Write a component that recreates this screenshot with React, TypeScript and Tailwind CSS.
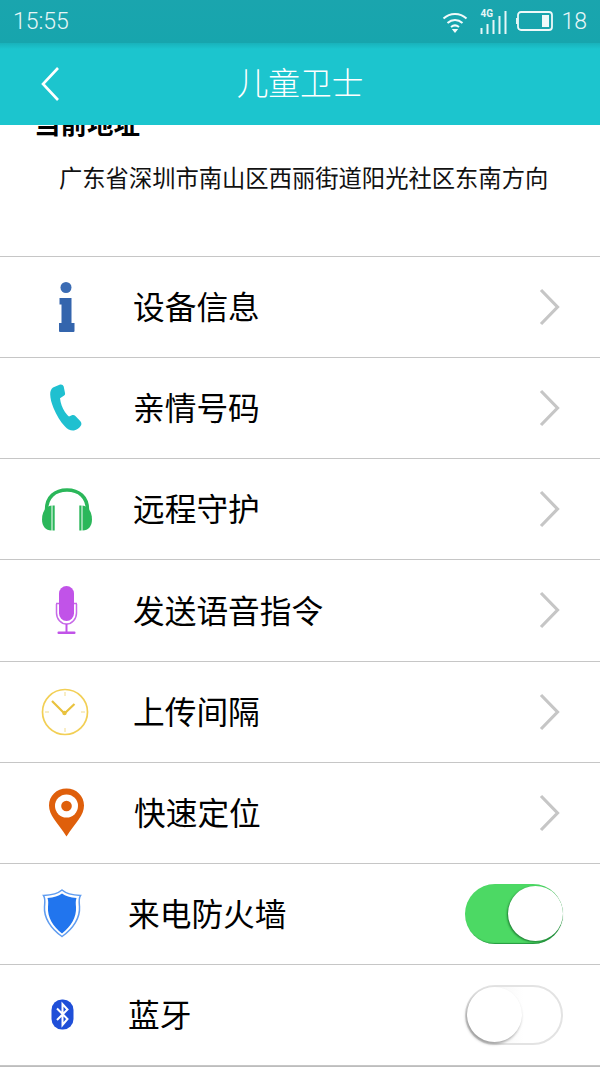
import { ReactNode } from 'react'

const CJK = '[font-family:"Noto_Sans_CJK_SC","Noto_Sans",sans-serif]'

// ── Row icons ─────────────────────────────────────────
function InfoIcon() {
  return (
    <svg width="16" height="50" viewBox="0 0 16 50">
      <circle cx="7" cy="5.500" r="5.500" fill="#3b6cb4" />
      <path d="M.5 16h12v25h3v8a1 1 0 0 1-1 1H1a1 1 0 0 1-1-1v-8h2.500V22.500H.5z" fill="#3465ad" />
    </svg>
  )
}

function PhoneIcon() {
  return (
    <svg width="32" height="49" viewBox="0 0 32 49">
      <path
        d="M3 3.500 9.500.8c2-.8 3.500 0 4.200 1.700l1.300 6.500c.3 1.500-.2 2.300-1.200 2.800l-3.800 2.500c.6 5 2.300 10 4.800 13.500 1.200 1.700 2.500 3.500 4.200 4.700l2.800-1.200c1.500-.6 2.700-.2 3.600.8l5 5.200c1.300 1.500 1.300 3.300.2 4.800-1.300 2-3.600 3.900-6.600 4.300-3.500.4-6.500-1.200-9-4C10.500 38 6.500 31 3.500 24 1.500 19 .3 14.500.2 10.500.1 7.500 1 5 3 3.500z"
        fill="#1fc0d0"
      />
    </svg>
  )
}

function HeadphonesIcon() {
  return (
    <svg width="50" height="43" viewBox="0 0 50 43">
      <path d="M4.500 22C4.500 9 13 2 25 2s20.500 7 20.500 20" fill="none" stroke="#2bb75a" strokeWidth="3.500" />
      <path d="M9.500 17.500V42.500C3.500 42.500 0 38 0 31.500 0 24 3.500 18.500 9.500 17.500z" fill="#2bb75a" />
      <path d="M40.500 17.500V42.500c6 0 9.500-4.500 9.500-11 0-7.500-3.500-13-9.500-14z" fill="#2bb75a" />
      <rect x="10.500" y="17.500" width="2.200" height="25" fill="#2bb75a" />
      <rect x="37.300" y="17.500" width="2.200" height="25" fill="#2bb75a" />
    </svg>
  )
}

function MicIcon() {
  return (
    <svg width="24" height="50" viewBox="0 0 24 50">
      <rect x="4" y="1" width="15" height="35" rx="7.500" fill="#c153e8" />
      <path d="M1.500 19v9c0 6 4.500 11 10 11s10-5 10-11v-9" fill="none" stroke="#c76ae8" strokeWidth="1.500" />
      <path d="M1 18.500h3M19 18.500h3" stroke="#c76ae8" strokeWidth="1.500" />
      <path d="M11.500 39v8" stroke="#c153e8" strokeWidth="2" />
      <rect x="2.500" y="46.500" width="18" height="2.500" rx="1" fill="#c153e8" />
    </svg>
  )
}

function ClockIcon() {
  return (
    <svg width="48" height="48" viewBox="0 0 48 48">
      <circle cx="24" cy="24" r="22.500" fill="none" stroke="#f2cf55" strokeWidth="1.700" />
      <path d="M24 4v4M24 40v4M4 24h4M40 24h4" stroke="#f3dc8c" strokeWidth="1" />
      <path d="M11 13 23.500 25.500 33.500 16" fill="none" stroke="#e9c23e" strokeWidth="2.200" />
      <circle cx="23.500" cy="25" r="2.200" fill="#e9c23e" />
    </svg>
  )
}

function PinIcon() {
  return (
    <svg width="37" height="49" viewBox="0 0 36 49">
      <path
        d="M18 .5C8 .5.500 8 .5 17.500c0 5 2 9 5 13.500C9 36 14 42 18 48.500 22 42 27 36 30.500 31c3-4.500 5-8.500 5-13.500C35.500 8 28 .5 18 .5z"
        fill="#df5f0b"
      />
      <circle cx="18" cy="18" r="11.500" fill="#fff" />
      <circle cx="18" cy="18" r="5.300" fill="#df5f0b" />
    </svg>
  )
}

function ShieldIcon() {
  return (
    <svg width="40" height="49" viewBox="0 0 40 49">
      <path
        d="M20 1c4 3.500 9.500 5 18.500 5.500-2 3-1.500 6-1 11 .8 11-6 22-17.500 30C8.500 39.500 1.700 28.500 2.500 17.500c.5-5 1-8-1-11C10.500 6 16 4.500 20 1z"
        fill="#fff"
        stroke="#5f9cf0"
        strokeWidth="1.500"
      />
      <path
        d="M20 4.500c3.500 2.500 8 4 14.500 4.500-1 3-.8 5.500-.5 9 .7 10-5 19.500-14 26.500C11 37.500 5.300 28 6 18c.3-3.500.5-6-.5-9C12 8.500 16.500 7 20 4.500z"
        fill="#2175ee"
      />
    </svg>
  )
}

function BluetoothIcon() {
  return (
    <svg width="23" height="31" viewBox="0 0 23 31">
      <rect x="0.500" y="0.500" width="22" height="30" rx="10.500" fill="#1f4fd8" />
      <path d="M6 9.500 16.500 20 11.500 26V5l5 5.500L6 21" fill="none" stroke="#fff" strokeWidth="2" />
    </svg>
  )
}

// ── Row trailing controls ─────────────────────────────
function Chevron() {
  return (
    <svg width="21" height="38" viewBox="0 0 21 38">
      <path d="M2 2 18.500 19 2 36" fill="none" stroke="#c6c6c6" strokeWidth="3.200" />
    </svg>
  )
}

function Toggle({ on }: { on: boolean }) {
  if (on) {
    return (
      <div className="flex h-[60px] w-[98px] justify-end rounded-full bg-[#4cd964] shadow-[inset_-1px_-1px_1px_rgba(0,90,30,0.5)]">
        <div className="h-[55px] w-[55px] self-center rounded-full bg-white shadow-[-1px_1px_2px_rgba(0,70,20,0.6)]" />
      </div>
    )
  }
  return (
    <div className="flex h-[60px] w-[98px] items-center rounded-full border-2 border-[#e3e3e3] bg-gradient-to-r from-[#eeeeee] to-white to-60%">
      <div className="h-[55px] w-[55px] rounded-full bg-white shadow-[-1px_2px_3px_rgba(0,0,0,0.35)]" />
    </div>
  )
}

// ── Menu data ─────────────────────────────────────────
interface RowData {
  label: string
  icon: ReactNode
  iconBox: string
  textClass: string
  toggle?: boolean
}

const ROWS: RowData[] = [
  { label: '设备信息', icon: <InfoIcon />, iconBox: 'w-[101px]', textClass: 'ml-[133px]' },
  { label: '亲情号码', icon: <PhoneIcon />, iconBox: 'w-[100px]', textClass: 'ml-[133px]' },
  { label: '远程守护', icon: <HeadphonesIcon />, iconBox: 'w-[102px]', textClass: 'ml-[133px]' },
  { label: '发送语音指令', icon: <MicIcon />, iconBox: 'w-[102px]', textClass: 'ml-[133px]' },
  { label: '上传间隔', icon: <ClockIcon />, iconBox: 'w-[98px]', textClass: 'ml-[133px]' },
  { label: '快速定位', icon: <PinIcon />, iconBox: 'w-[101px]', textClass: 'ml-[134px]' },
  { label: '来电防火墙', icon: <ShieldIcon />, iconBox: 'w-[92px]', textClass: 'ml-[128px]', toggle: true },
  { label: '蓝牙', icon: <BluetoothIcon />, iconBox: 'w-[92px]', textClass: 'ml-[128px]', toggle: false },
]

function Row({ row }: { row: RowData }) {
  return (
    <div className="relative flex h-[101.125px] shrink-0 items-center border-b border-[#c6c6c6]">
      <div className={`absolute left-[16px] top-0 flex h-full items-center justify-center ${row.iconBox}`}>
        {row.icon}
      </div>
      <span className={`${row.textClass} pb-[2px] text-[31.7px] leading-none text-black`}>{row.label}</span>
      {row.toggle === undefined ? (
        <div className="ml-auto mr-[40px] flex">
          <Chevron />
        </div>
      ) : (
        <div className="ml-auto mr-[37px]">
          <Toggle on={row.toggle} />
        </div>
      )}
    </div>
  )
}

export default function App() {
  return (
    <div className={`flex h-[1067px] w-[600px] flex-col overflow-hidden bg-white ${CJK}`}>
      {/* Status bar */}
      <div className="flex h-[43px] shrink-0 items-center bg-gradient-to-b from-[#1aa5ae] to-[#17a5ad] px-[13px] text-[#e6f6f7]">
        <span className="text-[23px] font-light leading-none [font-family:Roboto,sans-serif]">15:55</span>
        <div className="ml-auto flex items-center">
          <svg width="26" height="22" viewBox="0 0 26 22" className="mr-[12px]">
            <path d="M1.500 7.500C8 1.500 18 1.500 24.500 7.500M5.500 12C10 8 16 8 20.500 12M9 16c2.500-2 5.500-2 8 0" fill="none" stroke="#f2fbfb" strokeWidth="2" />
            <path d="M13 22 9.800 18h6.400z" fill="#f2fbfb" />
          </svg>
          <div className="relative mr-[8px] h-[24px] w-[28px]">
            <span className="absolute left-0 top-[-1px] text-[10px] font-bold leading-[10px] [font-family:Roboto,sans-serif]">4G</span>
            <svg width="28" height="24" viewBox="0 0 28 24" className="absolute left-0 top-0">
              <path d="M1.500 18v6M7.500 14v10M13.500 10v14M19.500 6v18M25.500 1v23" stroke="#e6f6f7" strokeWidth="2" />
            </svg>
          </div>
          <svg width="37" height="21" viewBox="0 0 37 21" className="mr-[8px]">
            <rect x="2" y="1" width="34" height="18" rx="3" fill="none" stroke="#eef9f9" strokeWidth="1.800" />
            <rect x="26" y="4" width="7" height="12" fill="#eef9f9" />
            <path d="M.8 7v6" stroke="#eef9f9" strokeWidth="1.500" />
          </svg>
          <span className="text-[23px] font-light leading-none [font-family:Roboto,sans-serif]">18</span>
        </div>
      </div>

      {/* Title bar */}
      <div className="relative z-10 flex h-[82px] shrink-0 items-center justify-center bg-gradient-to-b from-[#19b2bb] to-[#1cc5ce] to-[6px]">
        <svg width="20" height="36" viewBox="0 0 20 36" className="absolute left-[40px] top-[23px]">
          <path d="M18 2 3 18 18 34" fill="none" stroke="#fff" strokeWidth="2.600" />
        </svg>
        <span className="pb-[5px] text-[31.7px] font-light leading-none text-white">儿童卫士</span>
      </div>

      {/* Scrolled content, its heading is cut off by the title bar */}
      <div className="flex h-[132px] shrink-0 flex-col border-b border-[#c6c6c6]">
        <div className="ml-[34px] mt-[-17px] text-[26.5px] font-bold leading-[30px] text-black">当前地址</div>
        <div className="ml-[59px] mt-[24px] whitespace-nowrap text-[23.3px] leading-[30px] text-[#111]">
          广东省深圳市南山区西丽街道阳光社区东南方向
        </div>
      </div>

      {ROWS.map((row) => (
        <Row key={row.label} row={row} />
      ))}

      <div className="flex-1 bg-[#bdbdbd]" />
    </div>
  )
}
